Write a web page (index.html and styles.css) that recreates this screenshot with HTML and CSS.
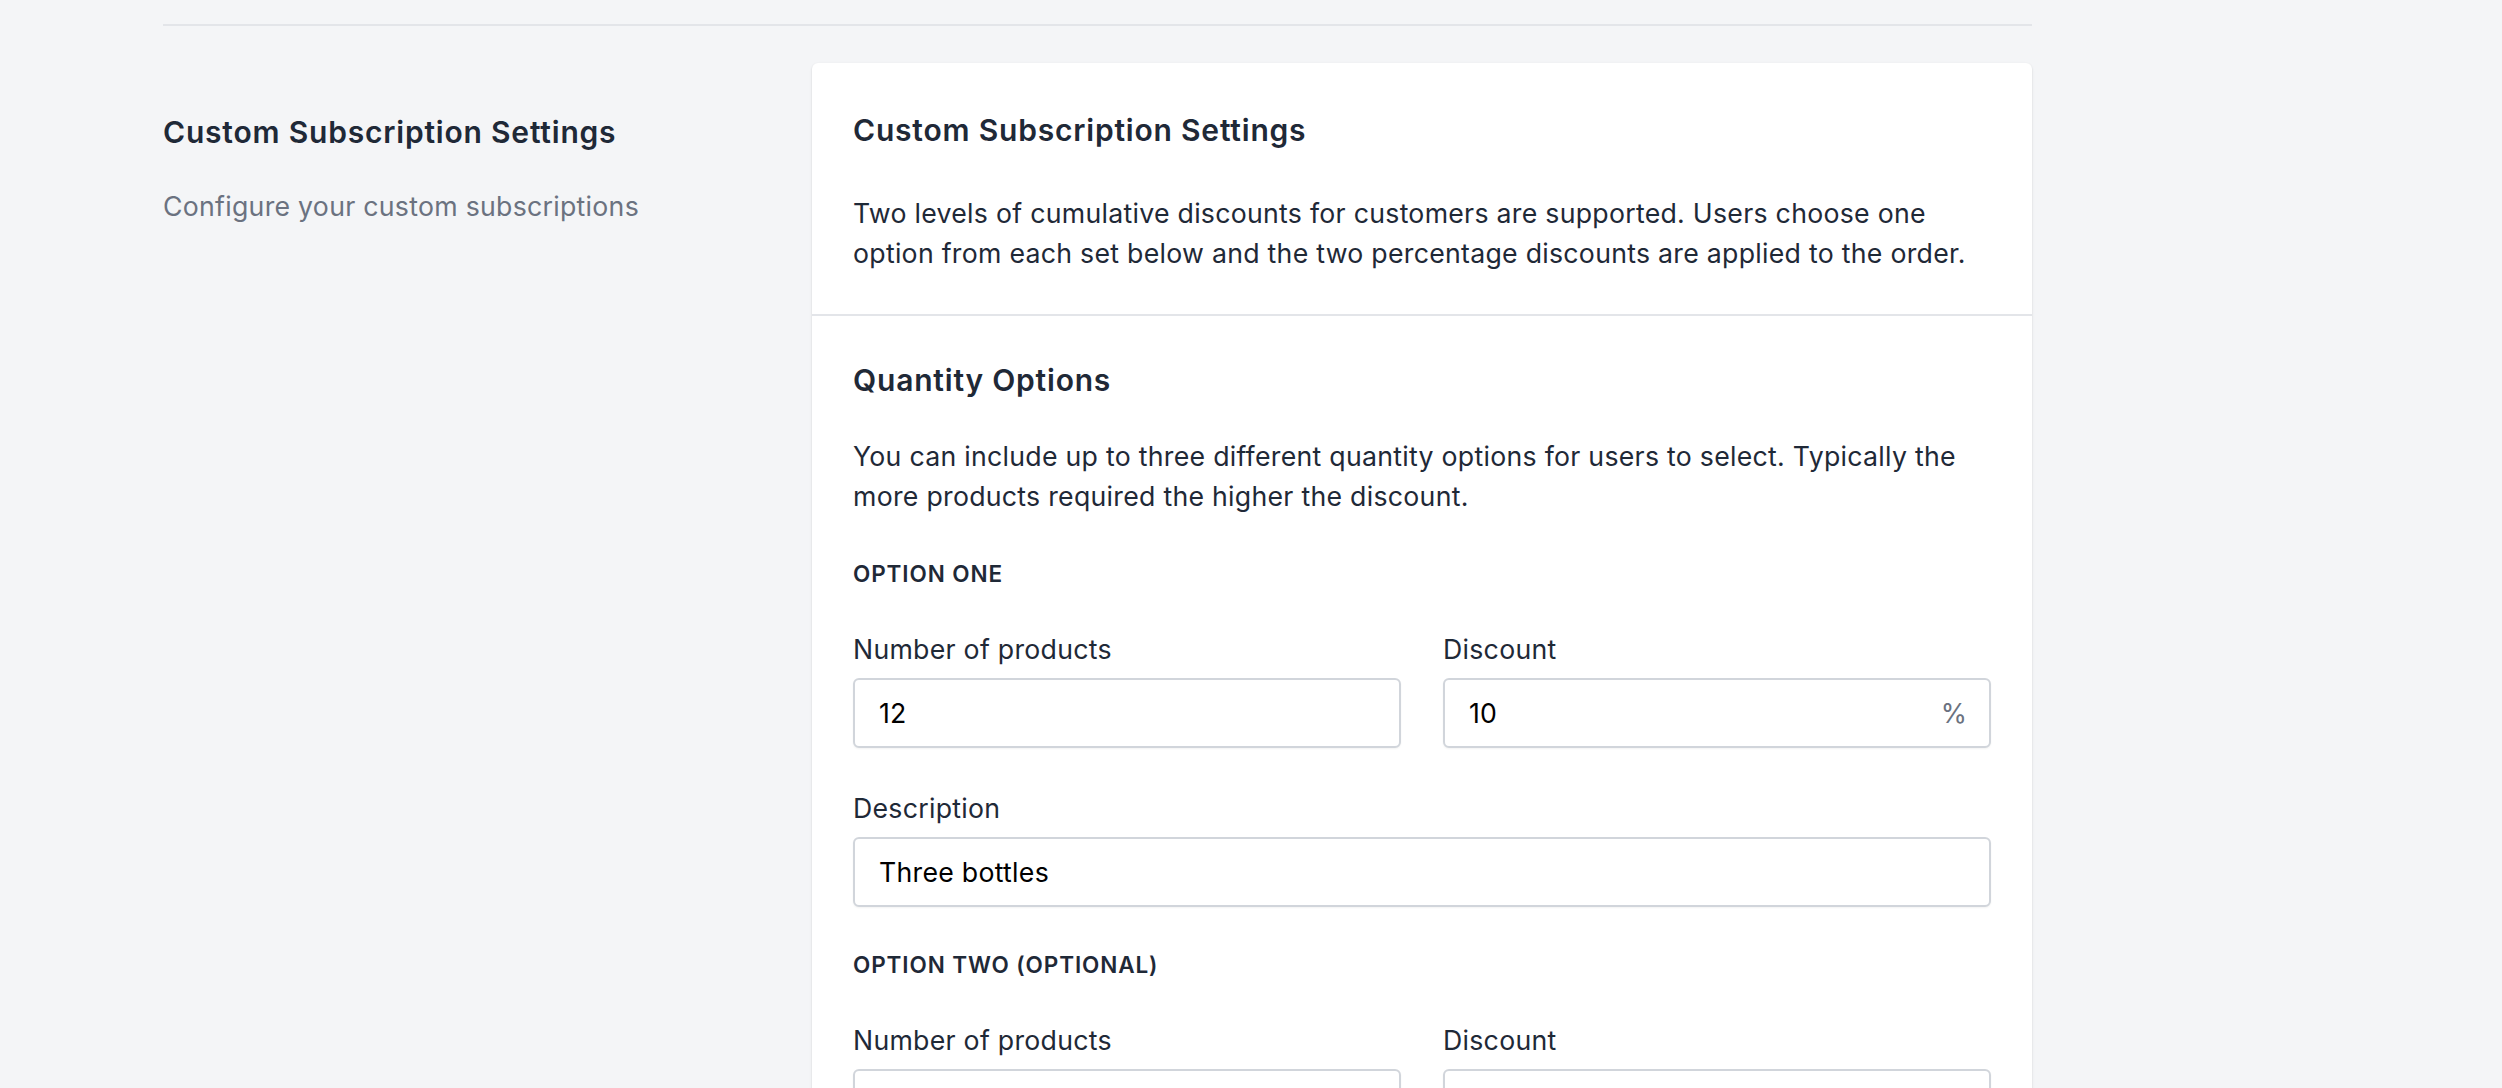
FILE: index.html
```html
<!DOCTYPE html>
<html lang="en">
<head>
    <meta charset="utf-8">
    <title>Custom Subscription Settings</title>
    <link rel="stylesheet" href="styles.css">
</head>
<body>
    <div class="page">
        <div class="rule"></div>

        <div class="settings">
            <div class="intro">
                <h3>Custom Subscription Settings</h3>
                <p>Configure your custom subscriptions</p>
            </div>

            <div class="card">
                <div class="card-section">
                    <h3>Custom Subscription Settings</h3>
                    <p class="lead">Two levels of cumulative discounts for customers are supported. Users choose one option from each set below and the two percentage discounts are applied to the order.</p>
                </div>

                <div class="card-section">
                    <h3>Quantity Options</h3>
                    <p class="lead lead-tight">You can include up to three different quantity options for users to select. Typically the more products required the higher the discount.</p>

                    <h4 class="option-title">Option one</h4>
                    <div class="field-row">
                        <div class="field">
                            <label for="qty1">Number of products</label>
                            <input id="qty1" type="text" value="12">
                        </div>
                        <div class="field">
                            <label for="disc1">Discount</label>
                            <div class="input-wrap">
                                <input id="disc1" type="text" value="10">
                                <span class="suffix">%</span>
                            </div>
                        </div>
                    </div>
                    <div class="field field-full">
                        <label for="desc1">Description</label>
                        <input id="desc1" type="text" value="Three bottles">
                    </div>

                    <h4 class="option-title">Option two (optional)</h4>
                    <div class="field-row">
                        <div class="field">
                            <label for="qty2">Number of products</label>
                            <input id="qty2" type="text" value="">
                        </div>
                        <div class="field">
                            <label for="disc2">Discount</label>
                            <div class="input-wrap">
                                <input id="disc2" type="text" value="">
                                <span class="suffix">%</span>
                            </div>
                        </div>
                    </div>
                </div>
            </div>
        </div>
    </div>
</body>
</html>
```

FILE: styles.css
```css
* { margin:0; padding:0; box-sizing:border-box }
html,body { background:#f4f5f7; font-family:Inter,"Noto Sans",sans-serif; color:#1f2937 }
.page { width:1869px; margin-left:163px }

/* divider above the section */
.rule { height:26px; border-bottom:2px solid #e3e5e9 }

.settings { display:grid; grid-template-columns:649px 1220px; margin-top:37px; }

.intro { padding-top:46px }
.intro h3 { font-size:30px; line-height:46px; font-weight:600; letter-spacing:0.8px; color:#1f2937 }
.intro p { margin-top:31px; font-size:26.7px; line-height:40px; letter-spacing:0.27px; color:#6b7280 }

.card { background:#fff; border-radius:6px; box-shadow:0 1px 3px rgba(0,0,0,0.1), 0 1px 2px rgba(0,0,0,0.06) }
.card-section { padding:44px 41px 41px 41px }
.card-section + .card-section { border-top:2px solid #e3e5e9; padding-top:41px; padding-bottom:80px }
.card-section h3 { font-size:30px; line-height:46px; font-weight:600; letter-spacing:0.8px; color:#1f2937 }
.lead { margin-top:40px; font-size:26.7px; line-height:40px; letter-spacing:0.27px; color:#1f2937 }
.lead-tight { margin-top:33px }

.option-title { margin-top:41px; font-size:22.5px; line-height:33px; font-weight:600; text-transform:uppercase; letter-spacing:0.9px; color:#1f2937 }

.field-row { display:grid; grid-template-columns:1fr 1fr; column-gap:42px; margin-top:39px }
.field-full { margin-top:40px }
.field label { display:block; font-size:26.7px; line-height:40px; letter-spacing:0.27px; color:#1f2937 }
.field input { display:block; width:100%; height:70px; margin-top:9px; padding:0 24px; border:2px solid #d1d5db; border-radius:6px; background:#fff; font-family:inherit; font-size:26.7px; letter-spacing:0.27px; color:#000; box-shadow:0 1px 2px rgba(0,0,0,0.05); outline:none }

.input-wrap { position:relative }
.suffix { position:absolute; right:24px; top:15px; font-size:26.7px; line-height:40px; color:#6b7280 }
```
